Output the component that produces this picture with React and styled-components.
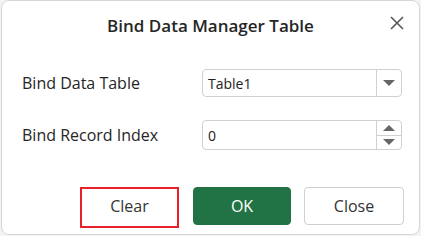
import React from 'react'
import { createGlobalStyle, styled } from 'styled-components'

const Global = createGlobalStyle`
  html, body {
    margin: 0;
    padding: 0;
    background: #f3f3f3;
  }
  body {
    font-family: "Open Sans", "Noto Sans", sans-serif;
    color: #333;
  }
`;

const CloseIcon = () => (
  <svg width="14" height="14" viewBox="0 0 14 14">
    <path d="M1 1 L13 13 M13 1 L1 13" stroke="#555" strokeWidth="1.6" fill="none" />
  </svg>
)

const App = () => {
  return (
    <>
      <Global />
      <Dialog>
        <Header>
          <Title>Bind Data Manager Table</Title>
          <CloseBtn><CloseIcon /></CloseBtn>
        </Header>
        <Body>
          <Row>
            <Label>Bind Data Table</Label>
            <Field>
              <Value>Table1</Value>
              <DropBtn><ArrowDown /></DropBtn>
            </Field>
          </Row>
          <Row>
            <Label>Bind Record Index</Label>
            <Field $tall>
              <Value>0</Value>
              <Spinner>
                <SpinHalf><ArrowUp /></SpinHalf>
                <SpinHalf><ArrowDown /></SpinHalf>
              </Spinner>
            </Field>
          </Row>
        </Body>
        <Footer>
          <Button $highlight $w={99}>Clear</Button>
          <Button $primary $w={98}>OK</Button>
          <Button $w={100}>Close</Button>
        </Footer>
      </Dialog>
    </>
  )
}

const Dialog = styled.div`
  box-sizing: border-box;
  width: 419px;
  height: 235px;
  margin-left: 1px;
  background: #fff;
  border: 1px solid #d6d6d6;
  border-radius: 8px;
  display: flex;
  flex-direction: column;
`;

const Header = styled.div`
  position: relative;
  height: 46px;
  display: flex;
  align-items: center;
  justify-content: center;
  padding-top: 2px;
  box-sizing: border-box;
`;

const Title = styled.div`
  font-size: 17px;
  font-weight: 600;
  color: #262626;
`;

const CloseBtn = styled.div`
  position: absolute;
  right: 15px;
  top: 15px;
  display: flex;
`;

const Body = styled.div`
  display: flex;
  flex-direction: column;
  gap: 23px;
  padding: 22px 17px 0 20px;
`;

const Row = styled.div`
  display: flex;
  align-items: center;
`;

const Label = styled.div`
  width: 180px;
  font-size: 16px;
  color: #262626;
`;

const Field = styled.div`
  box-sizing: border-box;
  width: 200px;
  height: ${p => (p.$tall ? '30px' : '28px')};
  border: 1px solid #d0d0d0;
  border-radius: 4px;
  display: flex;
  align-items: stretch;
`;

const Value = styled.div`
  flex: 1;
  display: flex;
  align-items: center;
  padding-left: 5px;
  font-size: 14px;
  color: #222;
`;

const DropBtn = styled.div`
  width: 24px;
  border-left: 1px solid #d0d0d0;
  display: flex;
  align-items: center;
  justify-content: center;
`;

const Spinner = styled.div`
  width: 24px;
  border-left: 1px solid #d0d0d0;
  display: flex;
  flex-direction: column;
`;

const SpinHalf = styled.div`
  flex: 1;
  display: flex;
  align-items: center;
  justify-content: center;
  & + & {
    border-top: 1px solid #d0d0d0;
  }
`;

const ArrowDown = styled.div`
  width: 0;
  height: 0;
  border-left: 6px solid transparent;
  border-right: 6px solid transparent;
  border-top: 6px solid #666;
`;

const ArrowUp = styled.div`
  width: 0;
  height: 0;
  border-left: 6px solid transparent;
  border-right: 6px solid transparent;
  border-bottom: 6px solid #666;
`;

const Footer = styled.div`
  margin-top: auto;
  display: flex;
  justify-content: flex-end;
  align-items: flex-start;
  gap: 13px;
  padding: 0 15px 6px 0;
`;

const Button = styled.div`
  box-sizing: border-box;
  width: ${p => p.$w}px;
  height: ${p => (p.$highlight ? '41px' : '38px')};
  margin-right: ${p => (p.$highlight ? '1px' : '0')};
  display: flex;
  align-items: center;
  justify-content: center;
  font-size: 16px;
  border-radius: ${p => (p.$highlight ? '0' : '4px')};
  background: ${p => (p.$primary ? '#217346' : '#fff')};
  color: ${p => (p.$primary ? '#fff' : '#333')};
  border: ${p =>
    p.$highlight ? '2px solid #e8202a' : p.$primary ? '1px solid #217346' : '1px solid #cfcfcf'};
  padding-bottom: ${p => (p.$highlight ? '3px' : '0')};
`;

export default App
